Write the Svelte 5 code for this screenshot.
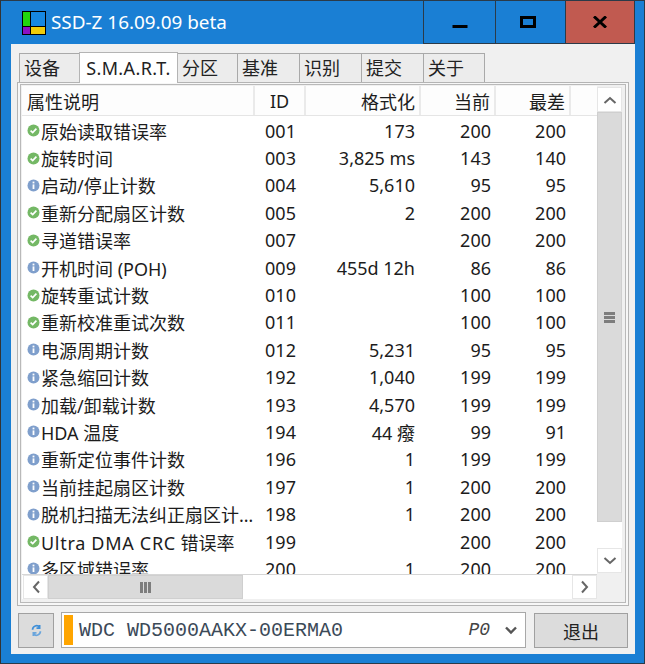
<script lang="ts">
  const tabs = ["设备", "S.M.A.R.T.", "分区", "基准", "识别", "提交", "关于"];

  const rows = [
    { ok: true, name: "原始读取错误率", id: "001", raw: "173", cur: 200, worst: 200 },
    { ok: true, name: "旋转时间", id: "003", raw: "3,825 ms", cur: 143, worst: 140 },
    { ok: false, name: "启动/停止计数", id: "004", raw: "5,610", cur: 95, worst: 95 },
    { ok: true, name: "重新分配扇区计数", id: "005", raw: "2", cur: 200, worst: 200 },
    { ok: true, name: "寻道错误率", id: "007", raw: "", cur: 200, worst: 200 },
    { ok: false, name: "开机时间 (POH)", id: "009", raw: "455d 12h", cur: 86, worst: 86 },
    { ok: true, name: "旋转重试计数", id: "010", raw: "", cur: 100, worst: 100 },
    { ok: true, name: "重新校准重试次数", id: "011", raw: "", cur: 100, worst: 100 },
    { ok: false, name: "电源周期计数", id: "012", raw: "5,231", cur: 95, worst: 95 },
    { ok: false, name: "紧急缩回计数", id: "192", raw: "1,040", cur: 199, worst: 199 },
    { ok: false, name: "加载/卸载计数", id: "193", raw: "4,570", cur: 199, worst: 199 },
    { ok: false, name: "HDA 温度", id: "194", raw: "44 癈", cur: 99, worst: 91 },
    { ok: false, name: "重新定位事件计数", id: "196", raw: "1", cur: 199, worst: 199 },
    { ok: false, name: "当前挂起扇区计数", id: "197", raw: "1", cur: 200, worst: 200 },
    { ok: false, name: "脱机扫描无法纠正扇区计数", id: "198", raw: "1", cur: 200, worst: 200 },
    { ok: true, lat: "Ultra DMA CRC", name: " 错误率", id: "199", raw: "", cur: 200, worst: 200 },
    { ok: false, name: "多区域错误率", id: "200", raw: "1", cur: 200, worst: 200 },
  ];
</script>

<div class="window">
  <header class="titlebar">
    <div class="logo">
      <div class="logo-top"><i class="lg"></i><i class="lb"></i></div>
      <div class="logo-bot"><i class="lp"></i><i class="ly"></i></div>
    </div>
    <span class="title">SSD-Z 16.09.09 beta</span>
    <div class="winbtns">
      <button class="wb"><svg width="16" height="16" viewBox="0 0 16 16"><rect x="0.5" y="11" width="15" height="3" fill="#000"/></svg></button>
      <button class="wb"><svg class="maxi" width="16" height="12" viewBox="0 0 16 12"><rect x="1.5" y="1.5" width="13" height="9" fill="none" stroke="#000" stroke-width="3"/></svg></button>
      <button class="wb close"><svg width="14" height="12" viewBox="0 0 14 12"><path d="M1 0.5 L13 11.5 M13 0.5 L1 11.5" stroke="#000" stroke-width="3" fill="none"/></svg></button>
    </div>
  </header>

  <main class="client">
    <div class="tabs">
      {#each tabs as t, i}
        <div class="tab" class:active={i === 1}>{t}</div>
      {/each}
    </div>

    <section class="panel">
      <div class="frame">
        <div class="table-row">
          <div class="table">
            <div class="row head">
              <div class="c name">属性说明</div>
              <div class="c id">ID</div>
              <div class="c raw">格式化</div>
              <div class="c cur">当前</div>
              <div class="c worst">最差</div>
              <div class="c fill"></div>
            </div>
            <div class="body">
              {#each rows as r}
                <div class="row">
                  <div class="c name">
                    <svg class="ico" width="13" height="13" viewBox="0 0 13 13">
                      {#if r.ok}
                        <circle cx="6.5" cy="6.5" r="6" fill="#74b865"/>
                        <path d="M3.6 6.6 L5.7 8.6 L9.4 4.7" stroke="#fff" stroke-width="1.7" fill="none"/>
                      {:else}
                        <circle cx="6.5" cy="6.5" r="6" fill="#7f9fcc"/>
                        <rect x="5.6" y="2.6" width="1.8" height="1.8" fill="#fff"/>
                        <rect x="5.6" y="5.4" width="1.8" height="4.6" fill="#fff"/>
                      {/if}
                    </svg>
                    <span class="nm">{#if r.lat}<span class="lat">{r.lat}</span>{/if}{r.name}</span>
                  </div>
                  <div class="c id">{r.id}</div>
                  <div class="c raw">{r.raw}</div>
                  <div class="c cur">{r.cur}</div>
                  <div class="c worst">{r.worst}</div>
                  <div class="c fill"></div>
                </div>
              {/each}
            </div>
          </div>
          <div class="vscroll">
            <div class="sbtn"><svg width="14" height="8" viewBox="0 0 14 8"><path d="M1.5 7 L7 2 L12.5 7" stroke="#666" stroke-width="2" fill="none"/></svg></div>
            <div class="vthumb"><span class="grip-h"></span><span class="grip-h"></span><span class="grip-h"></span></div>
            <div class="vtrack"></div>
            <div class="sbtn"><svg width="14" height="8" viewBox="0 0 14 8"><path d="M1.5 1 L7 6 L12.5 1" stroke="#666" stroke-width="2" fill="none"/></svg></div>
          </div>
        </div>
        <div class="hscroll-row">
          <div class="hscroll">
            <div class="sbtn h"><svg width="8" height="14" viewBox="0 0 8 14"><path d="M7 1.5 L2 7 L7 12.5" stroke="#666" stroke-width="2" fill="none"/></svg></div>
            <div class="hthumb"><span class="grip-v"></span><span class="grip-v"></span><span class="grip-v"></span></div>
            <div class="htrack"></div>
            <div class="sbtn h"><svg width="8" height="14" viewBox="0 0 8 14"><path d="M1 1.5 L6 7 L1 12.5" stroke="#666" stroke-width="2" fill="none"/></svg></div>
          </div>
          <div class="corner"></div>
        </div>
      </div>
    </section>

    <footer class="bottom">
      <button class="refresh">
        <svg width="11" height="13" viewBox="0 0 14 16">
          <path d="M2 7 A5 5 0 0 1 11 4 M11 1 V5 H7" stroke="#3f8fd8" stroke-width="2.2" fill="none"/>
          <path d="M12 9 A5 5 0 0 1 3 12 M3 15 V11 H7" stroke="#6aa5dc" stroke-width="2.2" fill="none"/>
        </svg>
      </button>
      <div class="combo">
        <span class="swatch"></span>
        <span class="model">WDC WD5000AAKX-00ERMA0</span>
        <span class="port">P0</span>
        <svg class="caret" width="12" height="9" viewBox="0 0 12 9"><path d="M1 1.5 L6 6.5 L11 1.5" stroke="#555" stroke-width="2.4" fill="none"/></svg>
      </div>
      <button class="exit">退出</button>
    </footer>
  </main>
</div>

<style>
  :global(body) {
    margin: 0;
    background: #1a7fd4;
  }
  .window {
    width: 645px;
    height: 664px;
    box-sizing: border-box;
    background: #1a7fd4;
    border: 1px solid #2b3a48;
    border-left-color: #333;
    padding: 0 9px 9px 10px;
    display: flex;
    flex-direction: column;
    font-family: "Noto Sans", "Noto Sans CJK SC", sans-serif;
    font-size: 18px;
    color: #1c1c1c;
  }
  .titlebar {
    height: 43px;
    display: flex;
    align-items: center;
    flex: none;
  }
  .logo {
    width: 24px;
    height: 24px;
    box-sizing: border-box;
    border: 1px solid #000;
    background: #000;
    display: flex;
    flex-direction: column;
    gap: 1px;
    margin: 0 5px 0 11px;
    flex: none;
  }
  .logo-top { display: flex; flex: 1; gap: 1px; }
  .logo-bot { display: flex; height: 7px; gap: 1px; }
  .logo i { display: block; }
  .lg { width: 7px; background: #22d60e; }
  .lb { flex: 1; background: #1687e2; }
  .lp { width: 7px; background: #8a12c4; }
  .ly { flex: 1; background: #f0cc0a; }
  .title {
    color: #fff;
    font-size: 18.9px;
    flex: 1;
    margin-top: -1px;
  }
  .winbtns {
    display: flex;
    align-self: stretch;
    border: 1px solid #2b3a48;
    border-top: none;
  }
  .wb {
    width: 70px;
    padding: 0;
    border: none;
    border-right: 1px solid #2b3a48;
    background: none;
    display: flex;
    align-items: center;
    justify-content: center;
  }
  .wb:first-child { width: 72px; }
  .wb:last-child { border-right: none; width: 68px; }
  .maxi { margin-right: 5px; }
  .close { background: #c15a50; }
  .client {
    flex: 1;
    background: #f0f0f0;
    display: flex;
    flex-direction: column;
    padding: 8px 6px 0 6px;
    min-height: 0;
  }
  .tabs {
    display: flex;
    align-items: flex-end;
    height: 30px;
    padding-left: 2px;
    position: relative;
    z-index: 1;
    flex: none;
  }
  .tab {
    height: 29px;
    width: 63px;
    box-sizing: border-box;
    padding: 0 4px;
    border: 1px solid #a9a9a9;
    border-bottom: none;
    margin-right: -1px;
    background: #ececec;
    display: flex;
    align-items: center;
    line-height: 1;
    color: #222;
  }
  .tab:nth-child(1), .tab:nth-child(3) { width: 61px; }
  .tab:last-child { width: 62px; }
  .tab.active {
    height: 31px;
    background: #fff;
    width: 99px;
    border-color: #b4b4b4;
    justify-content: center;
    padding: 0;
    margin-bottom: -1px;
    letter-spacing: 0.4px;
    position: relative;
  }
  .panel {
    height: 524px;
    box-sizing: border-box;
    border: 1px solid #b4b4b4;
    background: #f7f7f7;
    padding: 1px 2px 2px 2px;
    flex: none;
  }
  .frame {
    height: 100%;
    box-sizing: border-box;
    border: 1px solid #b9b9b9;
    padding: 1px 3px 3px 1px;
    background: #f0f0f0;
    display: flex;
    flex-direction: column;
  }
  .table-row {
    display: flex;
    flex: 1;
    min-height: 0;
  }
  .table {
    flex: 1;
    min-width: 0;
    display: flex;
    flex-direction: column;
    background: #fff;
  }
  .row {
    display: flex;
    height: 27.4px;
    align-items: center;
    white-space: nowrap;
  }
  .row.head {
    height: 30px;
    flex: none;
    border-bottom: 1px solid #e5e5e5;
    box-sizing: border-box;
    background: #fdfdfd;
    align-items: stretch;
  }
  .head .c {
    border-right: 2px solid #eaeaea;
    display: flex;
    align-items: center;
    box-sizing: border-box;
  }
  .head .raw, .head .cur, .head .worst { justify-content: flex-end; padding-right: 4px; }
  .head .id { justify-content: center; padding: 0; }
  .head .name { padding-left: 5px; }
  .head .fill { border-right: none; }
  .body {
    flex: 1;
    overflow: hidden;
    min-height: 0;
    padding-top: 1px;
  }
  .c { box-sizing: border-box; flex: none; }
  .name {
    width: 233px;
    display: flex;
    align-items: center;
    padding: 0 0 0 5px;
    overflow: hidden;
  }
  .ico { flex: none; margin-right: 1px; }
  .nm {
    overflow: hidden;
    text-overflow: ellipsis;
    color: #1c1c1c;
  }
  .lat { letter-spacing: 0.7px; }
  .id { width: 51px; text-align: center; }
  .raw { width: 115px; text-align: right; padding-right: 6px; }
  .cur { width: 75px; text-align: right; padding-right: 5px; }
  .worst { width: 75px; text-align: right; padding-right: 5px; }
  .fill { flex: 1; }
  .vscroll {
    width: 25px;
    flex: none;
    background: #f0f0f0;
    display: flex;
    flex-direction: column;
    padding: 1px 0;
    box-sizing: border-box;
  }
  .sbtn {
    height: 25px;
    flex: none;
    background: #fff;
    display: flex;
    align-items: center;
    justify-content: center;
    border: 1px solid #e6e6e6;
    box-sizing: border-box;
  }
  .sbtn.h { width: 25px; height: 100%; }
  .vthumb {
    height: 410px;
    flex: none;
    background: #dadada;
    border: 1px solid #cfcfcf;
    box-sizing: border-box;
    display: flex;
    flex-direction: column;
    align-items: center;
    justify-content: center;
    gap: 1px;
  }
  .grip-h { width: 11px; height: 3px; background: #7d7d7d; }
  .vtrack { flex: 1; background: #fff; }
  .hscroll-row {
    display: flex;
    height: 25px;
    flex: none;
  }
  .hscroll {
    flex: 1;
    display: flex;
    align-items: stretch;
    border-top: 1px solid #d6d6d6;
    box-sizing: border-box;
    padding-left: 1px;
    background: #fff;
  }
  .hthumb {
    width: 195px;
    flex: none;
    background: #dadada;
    border: 1px solid #cfcfcf;
    box-sizing: border-box;
    display: flex;
    align-items: center;
    justify-content: center;
    gap: 1px;
  }
  .grip-v { width: 3px; height: 11px; background: #7d7d7d; }
  .htrack { flex: 1; background: #fff; }
  .corner { width: 25px; background: #f0f0f0; flex: none; }
  .bottom {
    display: flex;
    height: 36px;
    margin-top: 6px;
    flex: none;
  }
  .refresh {
    width: 36px;
    padding: 0;
    margin: 1px 7px 0 1px;
    background: #dcdcdc;
    border: 1px solid #a0a0a0;
    display: flex;
    align-items: center;
    justify-content: center;
  }
  .combo {
    width: 465px;
    box-sizing: border-box;
    background: #fff;
    border: 1px solid #a8a8a8;
    display: flex;
    align-items: center;
    padding: 2px 8px 2px 2px;
    margin-right: 8px;
  }
  .swatch {
    width: 9px;
    align-self: stretch;
    background: #ffa500;
    margin-right: 6px;
  }
  .model {
    flex: 1;
    font-family: "Liberation Mono", monospace;
    font-size: 20px;
    color: #3c4a58;
  }
  .port {
    font-family: "Liberation Mono", monospace;
    font-style: italic;
    font-size: 18px;
    color: #444;
    margin-right: 15px;
  }
  .exit {
    width: 94px;
    padding: 0;
    margin-top: 1px;
    background: #dcdcdc;
    border: 1px solid #a0a0a0;
    font: inherit;
    color: #222;
  }
</style>
